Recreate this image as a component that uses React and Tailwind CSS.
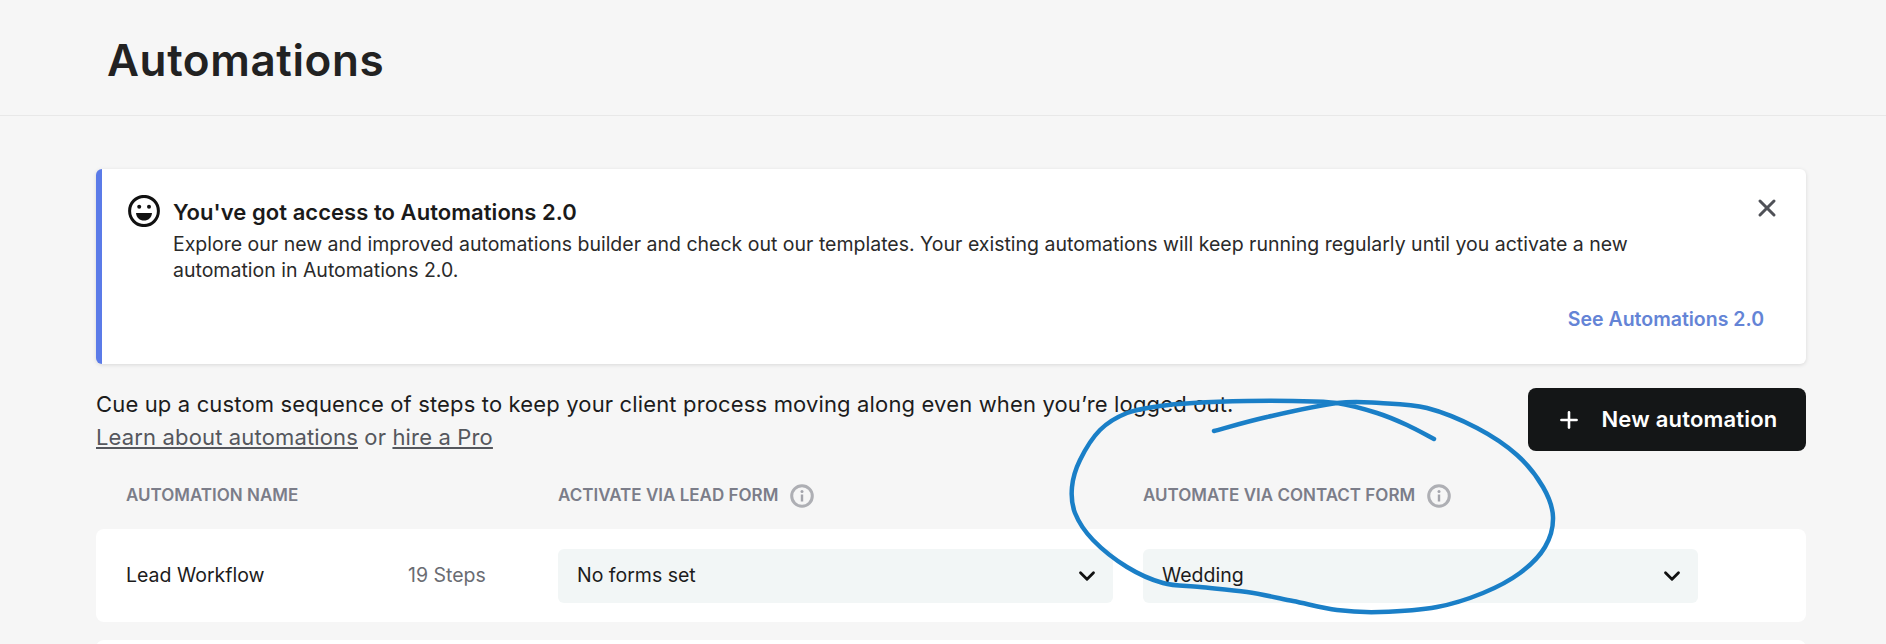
import { Plus, X, ChevronDown } from "lucide-react";

// hand-drawn circle around the contact form column, page coordinates
const scribble = [
  [1214, 431], [1267, 417], [1337, 403], [1380, 403], [1427, 408], [1477, 428], [1517, 455],
  [1543, 487], [1553, 517], [1545, 547], [1520, 573], [1483, 593], [1437, 607], [1380, 612],
  [1337, 610], [1293, 601], [1247, 592], [1200, 587], [1163, 583], [1127, 567], [1093, 540],
  [1075, 513], [1072, 487], [1080, 460], [1100, 430], [1127, 413], [1160, 406], [1193, 403],
  [1247, 401], [1293, 401], [1337, 403], [1377, 413], [1407, 425], [1434, 439],
];

const toPath = (pts) => {
  let d = `M${pts[0][0]} ${pts[0][1]}`;
  for (let i = 0; i < pts.length - 1; i++) {
    const p0 = pts[i - 1] || pts[i];
    const p1 = pts[i];
    const p2 = pts[i + 1];
    const p3 = pts[i + 2] || p2;
    const c1x = p1[0] + (p2[0] - p0[0]) / 6;
    const c1y = p1[1] + (p2[1] - p0[1]) / 6;
    const c2x = p2[0] - (p3[0] - p1[0]) / 6;
    const c2y = p2[1] - (p3[1] - p1[1]) / 6;
    d += ` C${c1x} ${c1y} ${c2x} ${c2y} ${p2[0]} ${p2[1]}`;
  }
  return d;
};

const Smiley = () => (
  <svg viewBox="0 0 32 32" className="h-8 w-8 shrink-0" fill="none">
    <ellipse cx="16" cy="16" rx="14.4" ry="14.6" stroke="#111" strokeWidth="3" />
    <circle cx="11.2" cy="11.8" r="2" fill="#111" />
    <circle cx="21" cy="11.8" r="2" fill="#111" />
    <path d="M8 18h16c-.5 4.8-3.6 7.6-8 7.6s-7.5-2.8-8-7.6z" fill="#111" />
  </svg>
);

const InfoIcon = () => (
  <svg viewBox="0 0 24 24" className="h-6 w-6 shrink-0" fill="none">
    <circle cx="12" cy="12" r="10.3" stroke="#aeafb4" strokeWidth="3" />
    <circle cx="12" cy="7.6" r="1.5" fill="#a3a4ab" />
    <rect x="10.8" y="10.5" width="2.4" height="7" fill="#a3a4ab" />
  </svg>
);

const FormSelect = ({ label }) => (
  <div className="flex h-[54px] items-center justify-between rounded-md bg-[#f2f6f6] pl-[19px] pr-[13px]">
    <span className="pt-[1px] text-[19.5px] text-[#1c1c1c]">{label}</span>
    <ChevronDown size={26} strokeWidth={2.6} className="text-[#111]" />
  </div>
);

const App = () => {
  return (
    <div className="relative h-screen overflow-hidden bg-[#f6f6f6] font-['Inter',sans-serif] text-[#1c1c1c]">
      <header className="flex h-[116px] items-center border-b border-[#e8e8e8] pl-[107px] pt-[4px]">
        <h1 className="text-[44px] font-semibold tracking-[0.6px] text-[#222]">Automations</h1>
      </header>

      <main className="pl-[96px] pr-[80px] pt-[53px]">
        <section className="flex h-[195px] rounded-md border-l-[6px] border-[#5b7be8] bg-white pl-[26px] pr-[30px] pt-[26px] shadow-[0_1px_4px_rgba(0,0,0,0.12)]">
          <Smiley />
          <div className="ml-[13px] flex-1">
            <h2 className="text-[22px] font-semibold leading-[34px] tracking-[0.05px] text-[#1a1a1a]">
              You've got access to Automations 2.0
            </h2>
            <p className="mt-[2px] w-[1480px] text-[19.5px] leading-[26px] text-[#2a2a2a]">
              Explore our new and improved automations builder and check out our templates. Your existing automations will keep running regularly until you activate a new automation in Automations 2.0.
            </p>
            <div className="mr-[-11px] mt-[22px] text-right text-[19.5px] font-semibold text-[#6484d6]">See Automations 2.0</div>
          </div>
          <X size={28} strokeWidth={2.6} className="mr-[-5px] mt-[-1px] shrink-0 text-[#4f5157]" />
        </section>

        <div className="mt-[24px] flex items-start justify-between">
          <div className="text-[22px] leading-[32px] tracking-[0.15px]">
            <p>Cue up a custom sequence of steps to keep your client process moving along even when you’re logged out.</p>
            <p className="mt-[1px] text-[#55575d]">
              <span className="underline">Learn about automations</span> or <span className="underline">hire a Pro</span>
            </p>
          </div>
          <button className="flex h-[63px] w-[278px] items-center justify-center gap-[19px] rounded-lg bg-[#141617] text-[22px] font-semibold tracking-[0.2px] text-white">
            <Plus size={26} strokeWidth={2.4} />
            New automation
          </button>
        </div>

        <div className="mt-[9px] grid h-[67px] grid-cols-[401px_554px_555px] items-center gap-x-[31px] pl-[30px] pr-[108px] text-[17px] font-semibold uppercase text-[#7b7d89]">
          <span>Automation name</span>
          <span className="flex items-center gap-3">Activate via lead form <InfoIcon /></span>
          <span className="flex items-center gap-3">Automate via contact form <InfoIcon /></span>
        </div>

        <div className="grid h-[93px] grid-cols-[282px_150px_555px_586px] items-center rounded-lg bg-white pl-[30px] pr-[108px] text-[19.5px]">
          <span className="pt-[1px]">Lead Workflow</span>
          <span className="pt-[1px] text-[#6a6c72]">19 Steps</span>
          <FormSelect label="No forms set" />
          <div className="ml-[30px] w-[555px]"><FormSelect label="Wedding" /></div>
        </div>

        <div className="mt-[18px] h-[93px] rounded-lg bg-white" />
      </main>

      <svg className="pointer-events-none absolute left-0 top-0 h-[644px] w-[1886px]" viewBox="0 0 1886 644" fill="none">
        <path d={toPath(scribble)} stroke="#1a7fc7" strokeWidth="4.5" strokeLinecap="round" strokeLinejoin="round" />
      </svg>
    </div>
  );
};

export default App;
